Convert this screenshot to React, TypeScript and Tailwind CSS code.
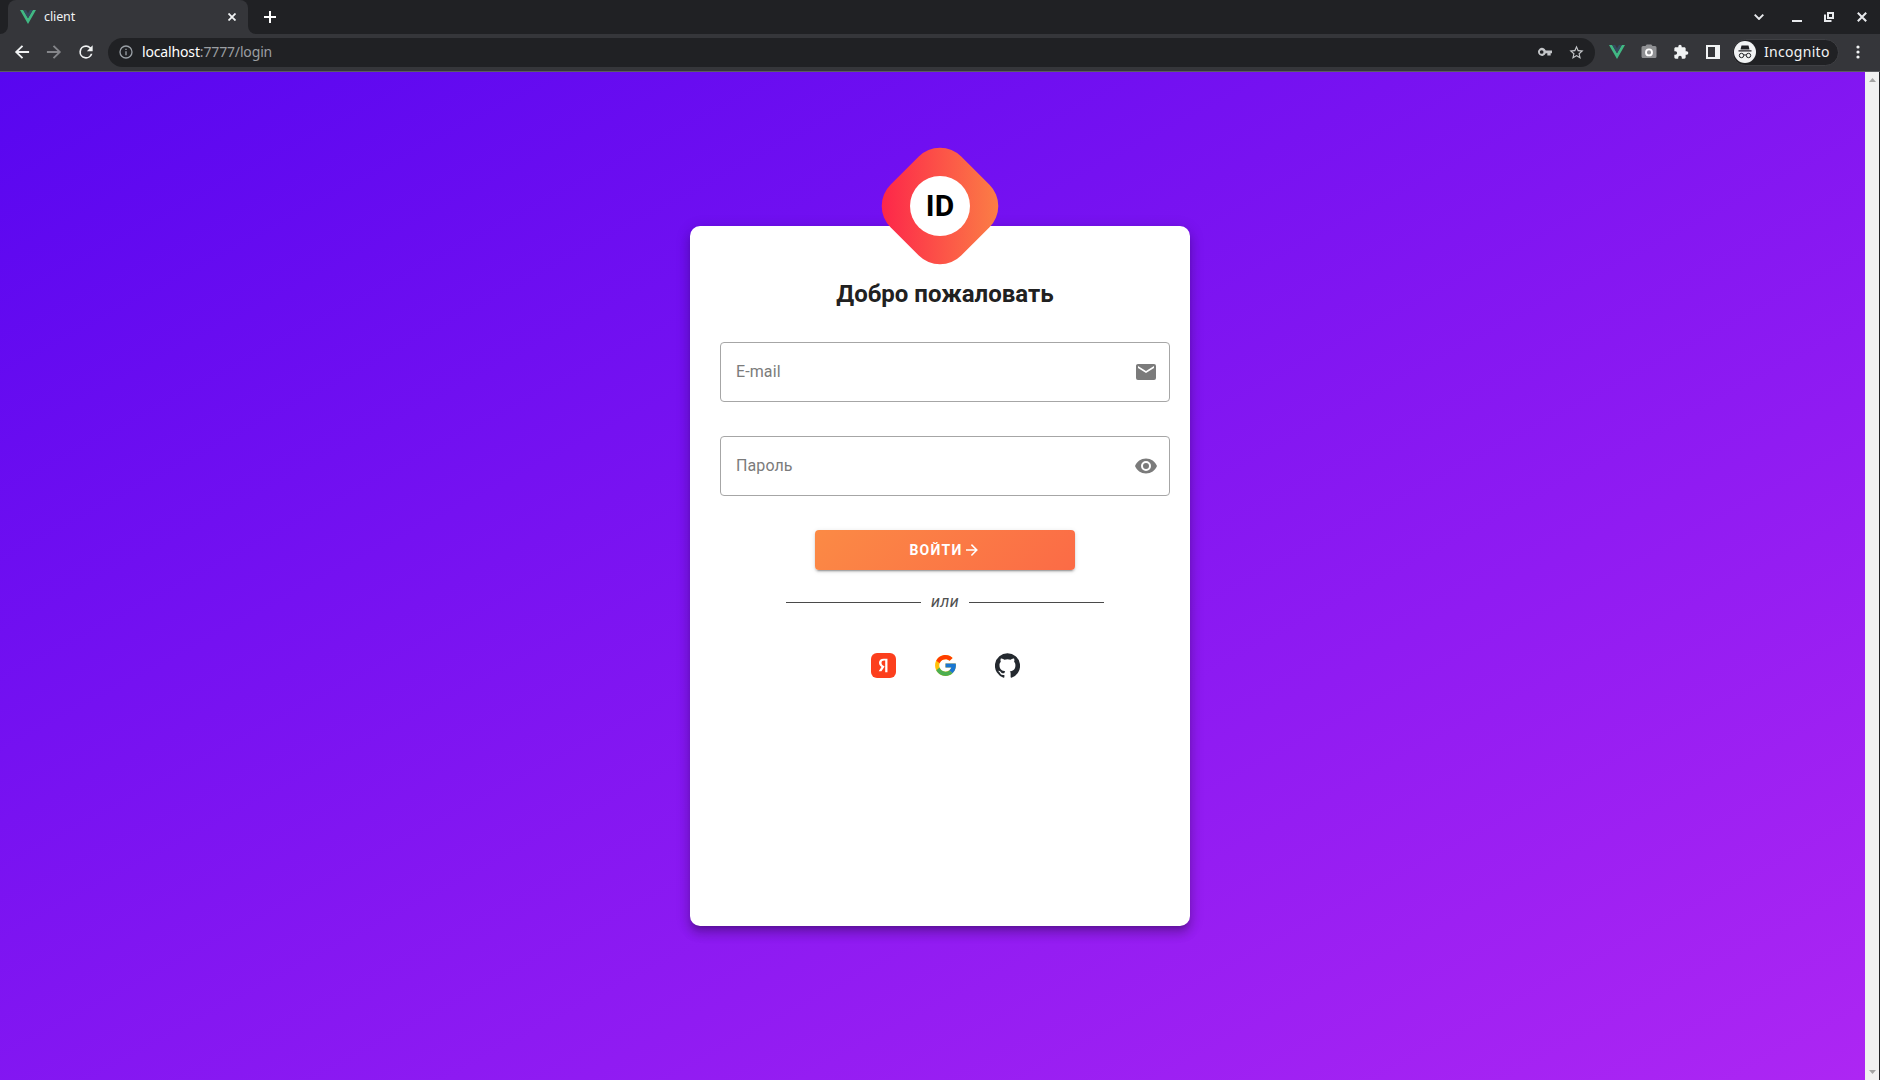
import React from "react";

function VueLogo({ className = "" }: { className?: string }) {
  return (
    <svg viewBox="0 0 16 14" className={className}>
      <path d="M0 0h3.2L8 8.3 12.8 0H16L8 14z" fill="#41b883" />
      <path d="M3.2 0h2.9L8 3.4 9.9 0h2.9L8 8.3z" fill="#35495e" />
    </svg>
  );
}

function Icon({ d, className = "" }: { d: string; className?: string }) {
  return (
    <svg viewBox="0 0 24 24" className={className} fill="currentColor">
      <path fillRule="evenodd" d={d} />
    </svg>
  );
}

const ARROW_RIGHT = "M4 11v2h12l-5.5 5.5 1.42 1.42L19.84 12l-7.92-7.92L10.5 5.5 16 11H4z";
const ARROW_BACK = "M20.500 10.800H7.830l5.590-5.390L11.800 3.800 3.500 12l8.300 8.200 1.610-1.610L7.830 13.200h12.670z";
const ARROW_FORWARD = "M3.500 10.800h12.670l-5.590-5.390L12.200 3.800l8.300 8.200-8.300 8.200-1.610-1.610 5.580-5.390H3.500z";
const REFRESH =
  "M17.65 6.35A7.95 7.95 0 0 0 12 4a8 8 0 1 0 7.73 10h-2.08A6 6 0 1 1 12 6c1.66 0 3.14.69 4.22 1.78L13 11h7V4l-2.35 2.35z";
const INFO = "M11 7h2v2h-2zm0 4h2v6h-2zm1-9a10 10 0 1 0 0 20 10 10 0 0 0 0-20zm0 18a8 8 0 1 1 0-16 8 8 0 0 1 0 16z";
const KEY =
  "M22.500 9.800v4h-2v3.400h-5v-3.400h-2.400A6 6 0 1 1 13.100 9.800zM7 9.200a2.800 2.800 0 1 0 0 5.600 2.800 2.800 0 0 0 0-5.600z";
const STAR =
  "M22 9.24l-7.19-.62L12 2 9.19 8.63 2 9.24l5.46 4.73L5.82 21 12 17.27 18.18 21l-1.63-7.03L22 9.24zM12 15.4l-3.76 2.27 1-4.28-3.32-2.88 4.38-.38L12 6.1l1.71 4.04 4.38.38-3.32 2.88 1 4.28L12 15.4z";
const PUZZLE =
  "M20.5 11H19V7c0-1.1-.9-2-2-2h-4V3.5a2.5 2.5 0 0 0-5 0V5H4c-1.1 0-1.99.9-1.99 2v3.8H3.5a2.7 2.7 0 0 1 0 5.4H2V20c0 1.1.9 2 2 2h3.8v-1.5a2.7 2.7 0 0 1 5.4 0V22H17c1.1 0 2-.9 2-2v-4h1.5a2.5 2.5 0 0 0 0-5z";
const CAMERA =
  "M9 2L7.17 4H4a2 2 0 0 0-2 2v12c0 1.1.9 2 2 2h16a2 2 0 0 0 2-2V6a2 2 0 0 0-2-2h-3.17L15 2H9z";
const MAIL = "M20 8l-8 5-8-5V6l8 5 8-5m0-2H4c-1.11 0-2 .89-2 2v12a2 2 0 0 0 2 2h16a2 2 0 0 0 2-2V6a2 2 0 0 0-2-2z";
const EYE =
  "M12 9a3 3 0 0 0 0 6 3 3 0 0 0 0-6m0 8a5 5 0 0 1 0-10 5 5 0 0 1 0 10m0-12.5C7 4.5 2.73 7.61 1 12c1.73 4.39 6 7.5 11 7.5s9.27-3.11 11-7.5c-1.73-4.39-6-7.5-11-7.5z";
const GITHUB =
  "M12 .3a12 12 0 0 0-3.8 23.4c.6.1.8-.3.8-.6v-2c-3.3.7-4-1.6-4-1.6-.6-1.4-1.4-1.8-1.4-1.8-1-.7.1-.7.1-.7 1.2 0 1.9 1.2 1.9 1.2 1 1.8 2.8 1.3 3.5 1 0-.8.4-1.3.7-1.6-2.7-.3-5.5-1.3-5.5-6 0-1.2.5-2.3 1.3-3.1-.2-.4-.6-1.6 0-3.2 0 0 1-.3 3.4 1.2a11.5 11.5 0 0 1 6 0c2.3-1.5 3.3-1.2 3.3-1.2.6 1.6.2 2.8 0 3.2.9.8 1.3 1.9 1.3 3.2 0 4.6-2.8 5.6-5.5 5.9.5.4.9 1 .9 2.2v3.3c0 .3.1.7.8.6A12 12 0 0 0 12 .3";

function TabStrip() {
  return (
    <div className="flex h-[34px] justify-between bg-[#202124]">
      <div className="flex">
        <div className="flex w-2 items-end bg-[#35363a]">
          <div className="h-full w-full rounded-br-lg bg-[#202124]" />
        </div>
        <div className="flex h-[34px] w-60 items-center rounded-t-lg bg-[#35363a] pr-3 pl-3">
          <VueLogo className="h-[14px] w-4" />
          <span className="ml-2 flex-1 text-[12.5px] leading-4 tracking-[-0.1px] text-[#f1f3f4]">client</span>
          <svg viewBox="0 0 8 8" className="size-2" stroke="#f1f3f4" strokeWidth="1.8">
            <path d="M.5.5l7 7M7.500.5l-7 7" />
          </svg>
        </div>
        <div className="bg-[#35363a]">
          <div className="flex h-full w-[44px] items-center rounded-bl-lg bg-[#202124] pl-4">
            <svg viewBox="0 0 12 12" className="size-3" stroke="#fff" strokeWidth="2">
              <path d="M6 0v12M0 6h12" />
            </svg>
          </div>
        </div>
      </div>
      <div className="flex items-center pr-[13px] text-[#e8eaed]">
        <svg viewBox="0 0 10 6" className="mr-[28px] h-[6px] w-[10px]" fill="none" stroke="currentColor" strokeWidth="1.9">
          <path d="M.7.7 5 5 9.3.7" />
        </svg>
        <div className="mt-2 mr-[22px] h-[2px] w-[10px] bg-[#e8eaed]" />
        <svg viewBox="0 0 10 10" className="mr-[23px] size-[10px]" fill="none" stroke="currentColor" strokeWidth="2">
          <path d="M4 1h5v5H4zM1 2.500v6.500h6.500" />
        </svg>
        <svg viewBox="0 0 10 10" className="size-[10px]" stroke="currentColor" strokeWidth="2">
          <path d="M.8.8l8.400 8.400M9.200.8.8 9.200" />
        </svg>
      </div>
    </div>
  );
}

function Toolbar() {
  return (
    <div className="flex h-[38px] items-center border-b border-[#5b5c60] bg-[#35363a] pr-[13px] pb-px pl-3 text-[#f1f3f4]">
      <Icon d={ARROW_BACK} className="size-5" />
      <Icon d={ARROW_FORWARD} className="ml-3 size-5 text-[#85868a]" />
      <Icon d={REFRESH} className="ml-3 size-5" />
      <div className="ml-3 flex h-[29px] w-[1487px] items-center rounded-full bg-[#202124] pr-[10px] pl-[10px]">
        <Icon d={INFO} className="size-4 text-[#9aa0a6]" />
        <span className="ml-2 flex-1 text-[14px] leading-5 tracking-[-0.15px] text-[#9b9ea2]">
          <span className="text-white">localhost</span>:7777/login
        </span>
        <Icon d={KEY} className="size-4 text-[#c4c6c9]" />
        <Icon d={STAR} className="ml-[15px] size-[17px] text-[#c4c6c9]" />
      </div>
      <VueLogo className="ml-[14px] h-[14px] w-4" />
      <svg viewBox="0 0 24 24" className="ml-[15px] size-[18px]">
        <path d={CAMERA} fill="#8f9093" />
        <circle cx="12" cy="12.500" r="4" fill="none" stroke="#fff" strokeWidth="2.500" />
      </svg>
      <Icon d={PUZZLE} className="ml-[15px] size-4" />
      <svg viewBox="0 0 14 14" className="ml-[17px] size-[14px]" fill="none" stroke="currentColor" strokeWidth="2">
        <path d="M1 1h12v12H1z" />
        <path d="M9 0h5v14H9z" fill="currentColor" stroke="none" />
      </svg>
      <div className="ml-3 flex h-[27px] w-[107px] items-center rounded-full border border-[#3f4044] bg-[#202124] pl-px">
        <svg viewBox="0 0 22 22" className="size-[22px]">
          <circle cx="11" cy="11" r="11" fill="#f1f3f4" />
          <path d="M7.500 4.500h7l1 4h-9zM4.500 9.300h13v1.200h-13z" fill="#202124" />
          <g fill="none" stroke="#202124">
            <circle cx="7.500" cy="14.500" r="2.200" />
            <circle cx="14.500" cy="14.500" r="2.200" />
            <path d="M9.700 14.200q1.300-.8 2.600 0" />
          </g>
        </svg>
        <span className="ml-2 text-[14px] leading-5 tracking-[0.3px]">Incognito</span>
      </div>
      <svg viewBox="0 0 4 14" className="ml-[17px] h-[14px] w-1" fill="currentColor">
        <circle cx="2" cy="2" r="1.600" />
        <circle cx="2" cy="7" r="1.600" />
        <circle cx="2" cy="12" r="1.600" />
      </svg>
    </div>
  );
}

function Field({ label, icon }: { label: string; icon: string }) {
  return (
    <div className="flex h-[60px] w-[450px] items-center justify-between rounded border border-[#a6a6a6] pr-[11px] pl-[15px] text-[#7b7b7b]">
      <span className="text-base tracking-[0.1px]">{label}</span>
      <Icon d={icon} className="size-6" />
    </div>
  );
}

function Logo() {
  return (
    <div className="absolute -top-[70px] left-[200px] flex size-[100px] items-center justify-center">
      <div className="absolute inset-0 rotate-45 rounded-[30px] bg-[linear-gradient(45deg,#fd1d4a,#fb8745)]" />
      <div className="relative flex size-[60px] items-center justify-center rounded-full bg-white pb-px text-[30px] font-bold text-black">
        ID
      </div>
    </div>
  );
}

function Socials() {
  return (
    <div className="mt-[39px] flex h-[25px] items-center gap-[37px]">
      <div className="flex size-[25px] items-center justify-center rounded-[6px] bg-[#fc3f1d]">
        <svg viewBox="0 0 24 24" className="size-[25px]" fill="#fff">
          <path d="M13.630 7.200h-.924c-1.694 0-2.585.858-2.585 2.123 0 1.430.616 2.100 1.881 2.959l1.045.704-3.003 4.487H7.400l2.695-4.014C8.545 12.348 7.675 11.270 7.675 9.444c0-2.288 1.595-3.850 4.620-3.850h3.502v12.800h-2.167z" />
        </svg>
      </div>
      <svg viewBox="0 0 48 48" className="size-[25px]">
        <path fill="#FFC107" d="M43.611 20.083H42V20H24v8h11.303c-1.649 4.657-6.080 8-11.303 8-6.627 0-12-5.373-12-12s5.373-12 12-12c3.059 0 5.842 1.154 7.961 3.039l5.657-5.657C34.046 6.053 29.268 4 24 4 12.955 4 4 12.955 4 24s8.955 20 20 20 20-8.955 20-20c0-1.341-.138-2.650-.389-3.917z" />
        <path fill="#FF3D00" d="m6.306 14.691 6.571 4.819C14.655 15.108 18.961 12 24 12c3.059 0 5.842 1.154 7.961 3.039l5.657-5.657C34.046 6.053 29.268 4 24 4 16.318 4 9.656 8.337 6.306 14.691z" />
        <path fill="#4CAF50" d="M24 44c5.166 0 9.860-1.977 13.409-5.192l-6.190-5.238A11.910 11.910 0 0 1 24 36c-5.202 0-9.619-3.317-11.283-7.946l-6.522 5.025C9.505 39.556 16.227 44 24 44z" />
        <path fill="#1976D2" d="M43.611 20.083H42V20H24v8h11.303a12.040 12.040 0 0 1-4.087 5.571l6.193 5.238C36.971 39.205 44 34 44 24c0-1.341-.138-2.650-.389-3.917z" />
      </svg>
      <Icon d={GITHUB} className="size-[25px] text-[#24292f]" />
    </div>
  );
}

function LoginCard() {
  return (
    <div className="relative flex h-[700px] w-[500px] flex-col items-center rounded-[10px] bg-white pl-[10px] font-['Roboto',sans-serif] shadow-[0_5px_5px_-3px_rgba(0,0,0,0.2),0_8px_10px_1px_rgba(0,0,0,0.14),0_3px_14px_2px_rgba(0,0,0,0.12)]">
      <Logo />
      <h1 className="mt-[52px] text-2xl font-bold text-[#212121]">Добро пожаловать</h1>
      <div className="mt-8 flex flex-col gap-[34px]">
        <Field label="E-mail" icon={MAIL} />
        <Field label="Пароль" icon={EYE} />
      </div>
      <button className="mt-[34px] flex h-10 w-[260px] items-center justify-center rounded bg-[linear-gradient(135deg,#fb8a45,#fb6b46)] text-sm font-bold tracking-[1.25px] text-white shadow-[0_3px_1px_-2px_rgba(0,0,0,0.2),0_2px_2px_rgba(0,0,0,0.14),0_1px_5px_rgba(0,0,0,0.12)]">
        ВОЙТИ
        <Icon d={ARROW_RIGHT} className="size-[18px]" />
      </button>
      <div className="mt-5 flex h-6 items-center">
        <div className="h-px w-[135px] bg-[#4a4a4a]" />
        <span className="w-12 text-center text-base tracking-[0.4px] text-[#505050] italic">или</span>
        <div className="h-px w-[135px] bg-[#4a4a4a]" />
      </div>
      <Socials />
    </div>
  );
}

function Scrollbar() {
  return (
    <div className="flex w-[15px] flex-col items-center justify-between border-r border-[#202124] bg-[#f1f1f1] pt-[6px] pb-[6px]">
      <svg viewBox="0 0 7 4" className="h-1 w-[7px]" fill="#a3a3a3">
        <path d="M0 4 3.500 0 7 4z" />
      </svg>
      <svg viewBox="0 0 7 4" className="h-1 w-[7px]" fill="#a3a3a3">
        <path d="M0 0 3.500 4 7 0z" />
      </svg>
    </div>
  );
}

export default function App() {
  return (
    <div className="flex h-[1080px] w-[1880px] flex-col overflow-hidden font-['Noto_Sans',sans-serif]">
      <TabStrip />
      <Toolbar />
      <div className="flex flex-1">
        <main className="flex flex-1 items-start justify-center bg-[linear-gradient(152deg,#5806f0,#ad26f3)] pt-[154px] pl-[15px]">
          <LoginCard />
        </main>
        <Scrollbar />
      </div>
    </div>
  );
}
